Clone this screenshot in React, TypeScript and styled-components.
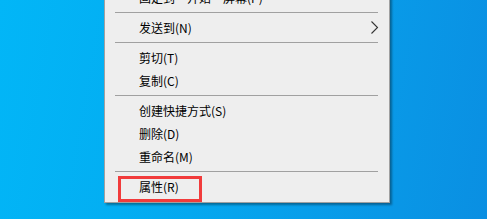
import React, { FC } from "react";
import styled, { createGlobalStyle } from "styled-components";

type Entry = { label: string; submenu?: boolean } | "sep";

const Entries: Array<Entry> = [
  { label: "固定到“开始”屏幕(P)" },
  "sep",
  { label: "发送到(N)", submenu: true },
  "sep",
  { label: "剪切(T)" },
  { label: "复制(C)" },
  "sep",
  { label: "创建快捷方式(S)" },
  { label: "删除(D)" },
  { label: "重命名(M)" },
  "sep",
  { label: "属性(R)" },
];

const GlobalStyle = createGlobalStyle`
  html, body {
    margin: 0;
    padding: 0;
    overflow: hidden;
  }
  body {
    font-family: "Noto Sans CJK SC", "Liberation Sans", sans-serif;
  }
`;

const Desktop = styled.div`
  position: relative;
  width: 487px;
  height: 219px;
  overflow: hidden;
  background: linear-gradient(100deg, #02b6f7 0%, #03aef2 30%, #089eea 65%, #0a8fe2 100%);
`;

const Menu = styled.ul`
  position: absolute;
  left: 104px;
  top: -18px;
  width: 286px;
  box-sizing: border-box;
  margin: 0;
  padding: 3px 0 4px;
  list-style: none;
  background-color: #eeeeee;
  border: 1px solid #a0a0a0;
  box-shadow: 2px 2px 2px rgba(0, 0, 0, 0.35);
`;

const MenuItem = styled.li`
  height: 23px;
  display: flex;
  align-items: center;
  padding: 0 10px 0 34px;
  font-size: 12px;
  line-height: 23px;
  color: #000;
  white-space: nowrap;
  cursor: default;
`;

const Label = styled.span`
  flex: 1;
`;

const Separator = styled.li`
  height: 1px;
  margin: 3px 11px 3px 10px;
  background-color: #a0a0a0;
`;

const Highlight = styled.div`
  position: absolute;
  left: 118px;
  top: 176px;
  width: 84px;
  height: 26px;
  box-sizing: border-box;
  border: 3px solid #f13b3b;
  pointer-events: none;
`;

const Chevron: FC = () => (
  <svg width="8" height="13" viewBox="0 0 8 13">
    <polyline
      points="0.5,0.5 6.5,6.5 0.5,12.5"
      fill="none"
      stroke="#333"
      strokeWidth="1.1"
    />
  </svg>
);

const App: FC = () => {
  return (
    <>
      <GlobalStyle />
      <Desktop>
        <Menu>
          {Entries.map((item, id) =>
            item === "sep" ? (
              <Separator key={id} />
            ) : (
              <MenuItem key={id}>
                <Label>{item.label}</Label>
                {item.submenu && <Chevron />}
              </MenuItem>
            )
          )}
        </Menu>
        <Highlight />
      </Desktop>
    </>
  );
};

export default App;
